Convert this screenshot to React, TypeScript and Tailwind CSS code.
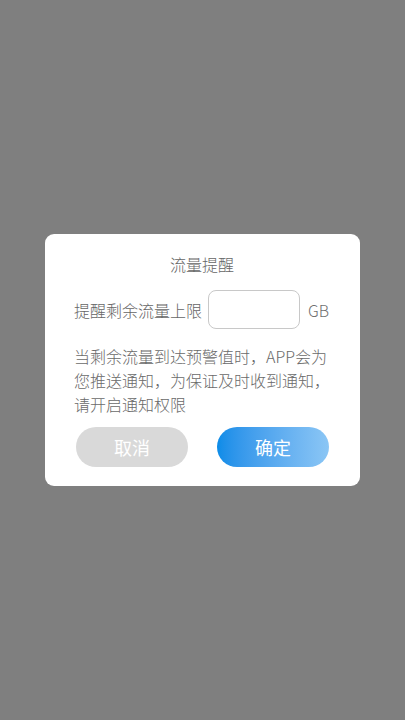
export default function App() {
  return (
    <div
      className="min-h-[720px] w-full bg-[#7f7f7f] flex items-center justify-center font-light"
      style={{ fontFamily: '"Noto Sans CJK SC", "Noto Sans", sans-serif' }}
    >
      {/* DIALOG */}
      <div className="w-[315px] bg-white rounded-[9px] pt-[18px] pb-[19px] pl-[29px] pr-[30px]">
        <h2 className="text-center text-[16px] leading-[24px] text-[#666666]">流量提醒</h2>

        <div className="mt-[14px] flex items-center">
          <span className="shrink-0 whitespace-nowrap text-[16px] leading-[24px] text-[#666666]">提醒剩余流量上限</span>
          <input
            className="shrink-0 ml-[6px] w-[92px] h-[39px] rounded-[8px] border border-[#c8c8c8] outline-none px-2"
            type="text"
          />
          <span className="shrink-0 ml-[8px] text-[16px] leading-[24px] text-[#6f6f6f]">GB</span>
        </div>

        <p className="mt-[15px] text-[16px] leading-[24px] text-[#6a6a6a]">
          当剩余流量到达预警值时，APP会为您推送通知，为保证及时收到通知，请开启通知权限
        </p>

        <div className="mt-[11px] flex justify-between pl-[2px] pr-[1px]">
          <button className="w-[112px] h-[40px] rounded-full bg-[#d9d9d9] text-white text-[18px] font-normal">
            取消
          </button>
          <button className="w-[112px] h-[40px] rounded-full bg-gradient-to-r from-[#0a8ce8] to-[#8bc6f5] text-white text-[18px] font-normal">
            确定
          </button>
        </div>
      </div>
    </div>
  );
}
